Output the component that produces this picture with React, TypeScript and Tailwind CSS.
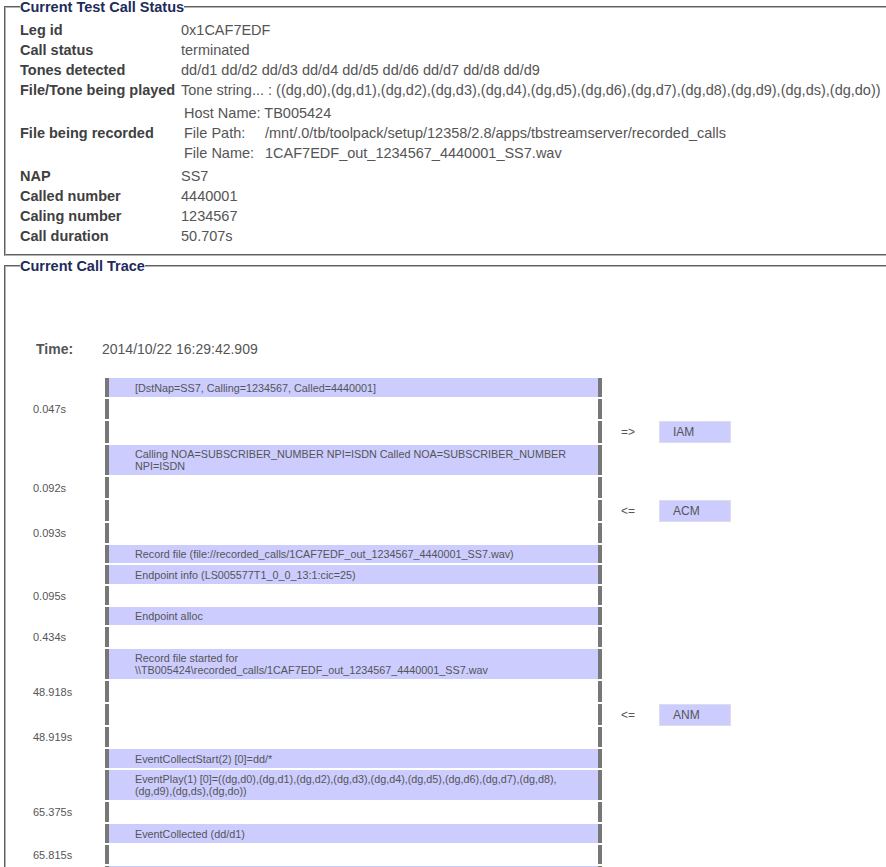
import React from 'react'

type TraceRow = {
  h: number;
  time?: string;
  msg?: string;
  dir?: string;
  sig?: string;
  blue?: boolean;
}

const status: [string, string][] = [
  ['Leg id', '0x1CAF7EDF'],
  ['Call status', 'terminated'],
  ['Tones detected', 'dd/d1 dd/d2 dd/d3 dd/d4 dd/d5 dd/d6 dd/d7 dd/d8 dd/d9'],
  ['File/Tone being played', 'Tone string... : ((dg,d0),(dg,d1),(dg,d2),(dg,d3),(dg,d4),(dg,d5),(dg,d6),(dg,d7),(dg,d8),(dg,d9),(dg,ds),(dg,do))'],
]

const status2: [string, string][] = [
  ['NAP', 'SS7'],
  ['Called number', '4440001'],
  ['Caling number', '1234567'],
  ['Call duration', '50.707s'],
]

const rows: TraceRow[] = [
  { h: 19, msg: '[DstNap=SS7, Calling=1234567, Called=4440001]' },
  { h: 20, time: '0.047s' },
  { h: 22, dir: '=>', sig: 'IAM' },
  { h: 30, msg: 'Calling NOA=SUBSCRIBER_NUMBER NPI=ISDN Called NOA=SUBSCRIBER_NUMBER NPI=ISDN' },
  { h: 21, time: '0.092s' },
  { h: 21, dir: '<=', sig: 'ACM' },
  { h: 20, time: '0.093s' },
  { h: 18, msg: 'Record file (file://recorded_calls/1CAF7EDF_out_1234567_4440001_SS7.wav)' },
  { h: 19, msg: 'Endpoint info (LS005577T1_0_0_13:1:cic=25)' },
  { h: 19, time: '0.095s' },
  { h: 18, msg: 'Endpoint alloc' },
  { h: 20, time: '0.434s' },
  { h: 30, msg: 'Record file started for \\\\TB005424\\recorded_calls/1CAF7EDF_out_1234567_4440001_SS7.wav' },
  { h: 21, time: '48.918s' },
  { h: 21, dir: '<=', sig: 'ANM' },
  { h: 20, time: '48.919s' },
  { h: 19, msg: 'EventCollectStart(2) [0]=dd/*' },
  { h: 30, msg: 'EventPlay(1) [0]=((dg,d0),(dg,d1),(dg,d2),(dg,d3),(dg,d4),(dg,d5),(dg,d6),(dg,d7),(dg,d8),(dg,d9),(dg,ds),(dg,do))' },
  { h: 20, time: '65.375s' },
  { h: 19, msg: 'EventCollected (dd/d1)' },
  { h: 19, time: '65.815s' },
  // next row only shows its top edge in the window
  { h: 19, blue: true },
]

function StatusRow({ label, value }: { label: string; value: string }) {
  return (
    <div className="flex h-[20px] items-center whitespace-nowrap">
      <div className="w-[161px] shrink-0 font-bold text-[#404040]">{label}</div>
      <div className="text-[#555]">{value}</div>
    </div>
  )
}

function Trace({ row }: { row: TraceRow }) {
  const blue = row.msg || row.blue
  return (
    <div className="flex" style={{ height: row.h }}>
      <div className="w-[85px] shrink-0 pl-[13px] flex items-center text-[11px] text-[#555]">{row.time}</div>
      <div className={`w-[497px] shrink-0 border-x-4 border-[#777] flex items-center pl-[26px] pr-[12px] text-[10.8px] leading-[12px] text-[#555] ${blue ? 'bg-[#ccccff]' : 'bg-white'}`}>
        {row.msg}
      </div>
      {row.sig && (
        <div className="flex items-center">
          <div className="w-[57px] pl-[19px] text-[12px] text-[#555]">{row.dir}</div>
          <div className="w-[72px] h-[22px] flex items-center pl-[13px] bg-[#ccccff] border border-[#dcdcec] text-[12px] text-[#555]">{row.sig}</div>
        </div>
      )}
    </div>
  )
}

export default function App() {
  return (
    <div className="w-[886px] h-[867px] overflow-hidden bg-white text-[14px] leading-[20px]" style={{ fontFamily: '"Liberation Sans", Arial, sans-serif' }}>
      <fieldset className="ml-[4px] mt-[1px] w-[910px] border-2 [border-style:groove] border-[#b4b4b4] px-[14px] pt-[7px] pb-[8px] text-[14.5px]">
        <legend className="text-[14.5px] leading-[12px] font-bold text-[#1d2b5a]">Current Test Call Status</legend>
        {status.map(([l, v]) => <StatusRow key={l} label={l} value={v} />)}
        <div className="flex items-center whitespace-nowrap">
          <div className="w-[161px] shrink-0 font-bold text-[#404040]">File being recorded</div>
          <div className="py-[3px] pl-[3px] text-[#555]">
            <div className="h-[20px]">Host Name: TB005424</div>
            <div className="flex h-[20px]"><span className="w-[81px]">File Path:</span><span>/mnt/.0/tb/toolpack/setup/12358/2.8/apps/tbstreamserver/recorded_calls</span></div>
            <div className="flex h-[20px]"><span className="w-[81px]">File Name:</span><span>1CAF7EDF_out_1234567_4440001_SS7.wav</span></div>
          </div>
        </div>
        {status2.map(([l, v]) => <StatusRow key={l} label={l} value={v} />)}
      </fieldset>

      <fieldset className="ml-[4px] mt-[4px] w-[910px] border-2 [border-style:groove] border-[#b4b4b4] px-[14px] pt-[67px] pb-[8px]">
        <legend className="text-[14.5px] leading-[12px] font-bold text-[#1d2b5a]">Current Call Trace</legend>
        <div className="flex h-[20px] items-center pl-[16px] text-[#555]">
          <span className="w-[66px] font-bold">Time:</span>
          <span>2014/10/22 16:29:42.909</span>
        </div>
        <div className="mt-[19px] flex flex-col gap-[2px]">
          {rows.map((r, i) => <Trace key={i} row={r} />)}
        </div>
      </fieldset>
    </div>
  )
}
